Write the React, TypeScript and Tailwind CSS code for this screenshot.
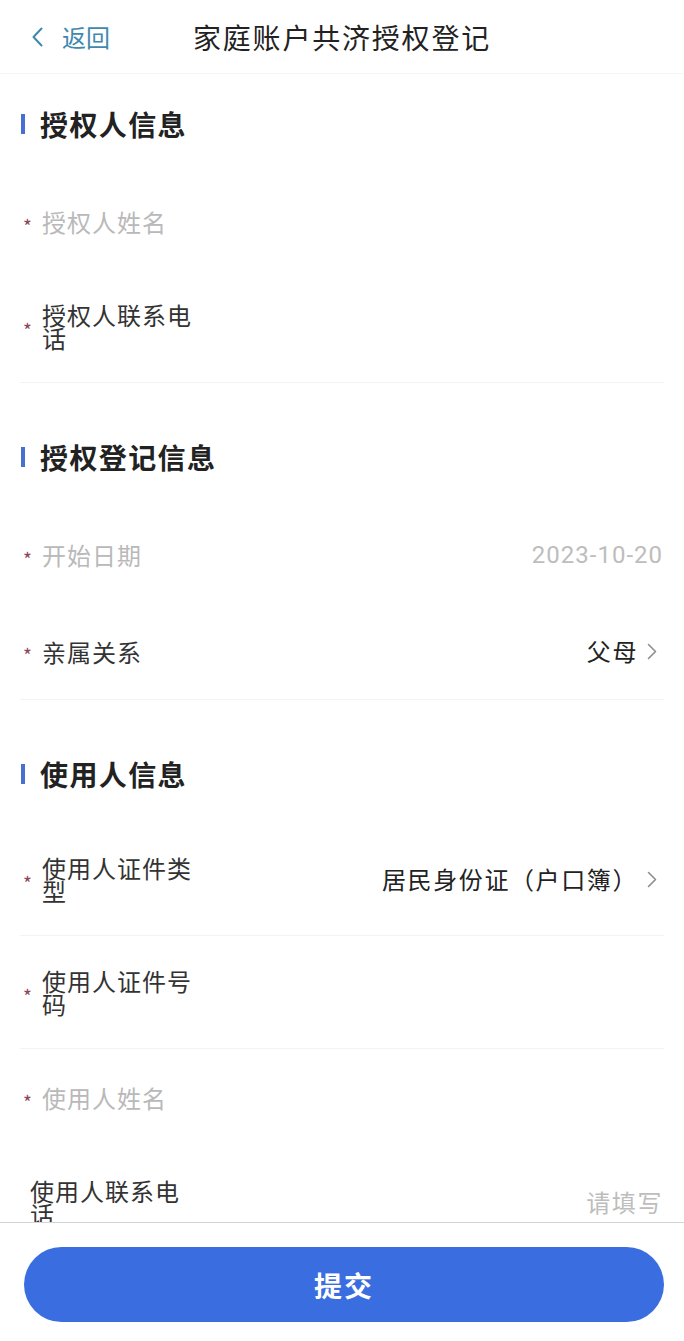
type Row = {
  label: string;
  required?: boolean;
  muted?: boolean;
  value?: string;
  valueTone?: "dark" | "muted";
  arrow?: boolean;
  divider?: boolean;
  numeric?: boolean;
};

type Section = { title: string; rows: Row[] };

const sections: Section[] = [
  {
    title: "授权人信息",
    rows: [
      { label: "授权人姓名", required: true, muted: true },
      { label: "授权人联系电话", required: true, divider: true },
    ],
  },
  {
    title: "授权登记信息",
    rows: [
      { label: "开始日期", required: true, muted: true, value: "2023-10-20", valueTone: "muted", numeric: true },
      { label: "亲属关系", required: true, value: "父母", valueTone: "dark", arrow: true, divider: true },
    ],
  },
  {
    title: "使用人信息",
    rows: [
      { label: "使用人证件类型", required: true, value: "居民身份证（户口簿）", valueTone: "dark", arrow: true, divider: true },
      { label: "使用人证件号码", required: true, divider: true },
      { label: "使用人姓名", required: true, muted: true },
      { label: "使用人联系电话", value: "请填写", valueTone: "muted" },
    ],
  },
];

function Chevron({ className }: { className?: string }) {
  return (
    <svg className={className} width="10" height="17" viewBox="0 0 10 17" fill="none">
      <polyline points="1.5,1.5 8.5,8.5 1.5,15.5" stroke="currentColor" strokeWidth="1.6" strokeLinecap="round" strokeLinejoin="round" />
    </svg>
  );
}

function FormRow({ row }: { row: Row }) {
  return (
    <div
      className={`mx-[20px] flex min-h-[97px] items-center py-[33px] pr-[1px] ${row.required ? "pl-[3px]" : "pl-[10px]"} ${
        row.divider ? "border-b border-[#f3f3f3]" : ""
      }`}
    >
      <div className="flex items-center">
        {row.required && <span className="w-[19px] pt-[7px] text-[19px] leading-none text-[#8e4656]">*</span>}
        <span
          className={`w-[160px] text-[24px] leading-[23px] tracking-[1px] ${row.muted ? "text-[#b9b9b9]" : "text-[#333333]"}`}
        >
          {row.label}
        </span>
      </div>
      <div className="flex flex-1 items-center justify-end">
        {row.value && (
          <span
            className={`text-[24px] leading-[26px] ${
              row.valueTone === "muted" ? "text-[#bdbdbd]" : "text-[#222222]"
            } ${row.numeric ? "font-['Roboto',sans-serif] tracking-[1px]" : "tracking-[1.6px]"}`}
          >
            {row.value}
          </span>
        )}
        {row.arrow && <Chevron className="ml-[9px] mr-[6px] text-[#8e8e8e]" />}
      </div>
    </div>
  );
}

export default function App() {
  return (
    <div className="flex h-[1341px] flex-col overflow-hidden bg-white font-['Noto_Sans_CJK_SC','Noto_Sans',sans-serif]">
      {/* Nav bar */}
      <div className="grid h-[74px] shrink-0 grid-cols-[1fr_auto_1fr] items-center border-b border-[#f6f6f6]">
        <div className="flex items-center gap-[19px] pl-[32px] text-[#3f89ad]">
          <svg width="11" height="20" viewBox="0 0 11 20" fill="none">
            <polyline points="9.5,1.5 1.5,10 9.5,18.5" stroke="currentColor" strokeWidth="2" strokeLinecap="round" strokeLinejoin="round" />
          </svg>
          <span className="text-[24px] leading-none">返回</span>
        </div>
        <h1 className="text-[28px] leading-none tracking-[1.8px] text-[#222222]">家庭账户共济授权登记</h1>
        <div />
      </div>

      {/* Form */}
      <div className="flex-1 overflow-hidden">
        {sections.map((s, i) => (
          <div key={s.title} className={i > 0 ? "mt-[24px]" : ""}>
            <div className="flex items-center gap-[15px] pb-[33px] pl-[21px] pt-[34px]">
              <span className="h-[20px] w-[4px] bg-[#4a6fd2]" />
              <span className="text-[28px] font-bold leading-[32px] tracking-[1.4px] text-[#222222]">{s.title}</span>
            </div>
            {s.rows.map((r) => (
              <FormRow key={r.label} row={r} />
            ))}
          </div>
        ))}
      </div>

      {/* Bottom bar */}
      <div className="shrink-0 border-t border-[#d4d4d4] pb-[19px] pl-[24px] pr-[20px] pt-[24px]">
        <button className="flex h-[75px] w-full items-center justify-center rounded-full bg-[#3a6ee0] text-[28px] font-bold tracking-[2px] text-white">
          提交
        </button>
      </div>
    </div>
  );
}
